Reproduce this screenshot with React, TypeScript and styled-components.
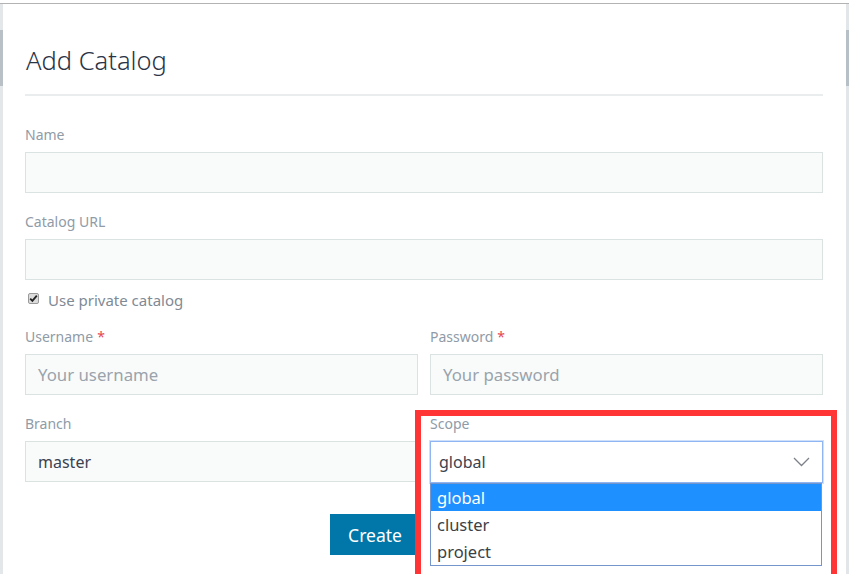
import React from 'react';
import styled, { createGlobalStyle } from 'styled-components';

const GlobalStyle = createGlobalStyle`
  html, body {
    margin: 0;
    padding: 0;
    height: 100%;
    overflow: hidden;
    background: #ffffff;
  }

  #root {
    height: 100%;
  }
`;

const Page = styled.div`
  display: flex;
  flex-direction: column;
  height: 100%;
  font-family: 'Noto Sans', 'Open Sans', sans-serif;
`;

const TopEdge = styled.div`
  height: 3px;
  background: #ffffff;
  border-bottom: 1px solid #b3b3b3;
  flex: none;
`;

const Stage = styled.div`
  flex: 1;
  display: flex;
  min-height: 0;
`;

const Gutter = styled.div`
  width: 3px;
  flex: none;
  background: #e3e7ea;
  display: flex;
  flex-direction: column;
  padding-top: 26px;
`;

const GutterThumb = styled.div`
  height: 56px;
  background: #b9c0c6;
`;

const Modal = styled.div`
  flex: 1;
  position: relative;
  background: #ffffff;
  padding: 42px 23px 0 22px;
  display: flex;
  flex-direction: column;
`;

const Title = styled.h1`
  margin: 0;
  font-size: 25.5px;
  line-height: 28px;
  font-weight: 300;
  color: #2a3446;
  padding-left: 1px;
`;

const Divider = styled.hr`
  margin: 20px 0 30px;
  border: none;
  height: 2px;
  background: #e9eded;
`;

const Field = styled.div<{ $gap?: number }>`
  display: flex;
  flex-direction: column;
  margin-bottom: ${(p) => p.$gap ?? 20}px;
  position: relative;
`;

const Label = styled.label`
  font-size: 14px;
  line-height: 18px;
  color: #8f9ba7;
  margin-bottom: 8px;
`;

const Required = styled.span`
  color: #e5484d;
  margin-left: 4px;
`;

const TextInput = styled.div<{ $muted?: boolean }>`
  box-sizing: border-box;
  height: 41px;
  border: 1px solid #dbe2e2;
  background: #f9fbfb;
  padding: 0 12px;
  display: flex;
  align-items: center;
  font-size: ${(p) => (p.$muted ? 16.8 : 16)}px;
  color: ${(p) => (p.$muted ? '#9aa3ab' : '#3b4250')};
`;

const Row = styled.div`
  display: grid;
  grid-template-columns: 1fr 1fr;
  column-gap: 12px;
`;

const CheckRow = styled.div`
  display: flex;
  align-items: center;
  gap: 9px;
  height: 18px;
  margin: -9px 0 19px 3px;
  font-size: 15px;
  color: #7f8a95;
`;

const CheckBox = styled.span`
  width: 11px;
  height: 11px;
  box-sizing: border-box;
  border: 1px solid #9a9a9a;
  border-radius: 2px;
  background: #dcdcdc;
  display: flex;
  align-items: center;
  justify-content: center;
  margin-top: -3px;
`;

const SelectBox = styled.div`
  box-sizing: border-box;
  height: 42px;
  border: 1px solid #8fb6f3;
  box-shadow: 0 0 0 1px #cfe0fb;
  background: #ffffff;
  padding: 0 12px 0 8px;
  display: flex;
  align-items: center;
  justify-content: space-between;
  font-size: 16px;
  color: #3b4250;
`;

const OptionList = styled.ul`
  position: absolute;
  top: 100%;
  left: 0;
  right: 1px;
  margin: 0;
  padding: 0;
  list-style: none;
  background: #ffffff;
  border: 1px solid #7596cc;
  z-index: 2;
`;

const Option = styled.li<{ $active?: boolean }>`
  height: 27px;
  line-height: 27px;
  padding-left: 6px;
  font-size: 16.5px;
  color: ${(p) => (p.$active ? '#ffffff' : '#3b3f46')};
  background: ${(p) => (p.$active ? '#1e90ff' : 'transparent')};
`;

const Footer = styled.div`
  display: flex;
  justify-content: flex-start;
  margin-top: 31px;
  padding-left: 305px;
`;

const PrimaryButton = styled.button`
  height: 41px;
  width: 90px;
  border: none;
  background: #0077a8;
  color: #ffffff;
  font-family: 'Noto Sans', 'Open Sans', sans-serif;
  font-size: 17.5px;
`;

const Highlight = styled.div`
  position: absolute;
  left: 412px;
  top: 406px;
  width: 422px;
  height: 180px;
  box-sizing: border-box;
  border: 6px solid #ff3535;
  pointer-events: none;
  z-index: 3;
`;

const Scrollbar = styled.div`
  width: 3px;
  flex: none;
  background: #e2e6e9;
  padding-top: 26px;
`;

const ScrollThumb = styled.div`
  height: 56px;
  background: #b8c0c7;
`;

const Chevron = () => (
  <svg width="17" height="10" viewBox="0 0 17 10" fill="none">
    <path d="M1 1l7.5 7.5L16 1" stroke="#7c8088" strokeWidth="1.3" />
  </svg>
);

const Check = () => (
  <svg width="9" height="9" viewBox="0 0 9 9">
    <path d="M1.2 4.6l2.2 2.3L7.8 1.6" stroke="#222" strokeWidth="1.8" fill="none" />
  </svg>
);

export default function App() {
  return (
    <Page>
      <GlobalStyle />
      <TopEdge />
      <Stage>
        <Gutter>
          <GutterThumb />
        </Gutter>
        <Modal>
          <Title>Add Catalog</Title>
          <Divider />

          <Field>
            <Label>Name</Label>
            <TextInput />
          </Field>

          <Field>
            <Label>Catalog URL</Label>
            <TextInput />
          </Field>

          <CheckRow>
            <CheckBox>
              <Check />
            </CheckBox>
            Use private catalog
          </CheckRow>

          <Row>
            <Field>
              <Label>
                Username<Required>*</Required>
              </Label>
              <TextInput $muted>Your username</TextInput>
            </Field>
            <Field>
              <Label>
                Password<Required>*</Required>
              </Label>
              <TextInput $muted>Your password</TextInput>
            </Field>
          </Row>

          <Row>
            <Field $gap={0}>
              <Label>Branch</Label>
              <TextInput>master</TextInput>
            </Field>
            <Field $gap={0}>
              <Label>Scope</Label>
              <SelectBox>
                global
                <Chevron />
              </SelectBox>
              <OptionList>
                <Option $active>global</Option>
                <Option>cluster</Option>
                <Option>project</Option>
              </OptionList>
            </Field>
          </Row>

          <Footer>
            <PrimaryButton>Create</PrimaryButton>
          </Footer>

          <Highlight />
        </Modal>
        <Scrollbar>
          <ScrollThumb />
        </Scrollbar>
      </Stage>
    </Page>
  );
}
